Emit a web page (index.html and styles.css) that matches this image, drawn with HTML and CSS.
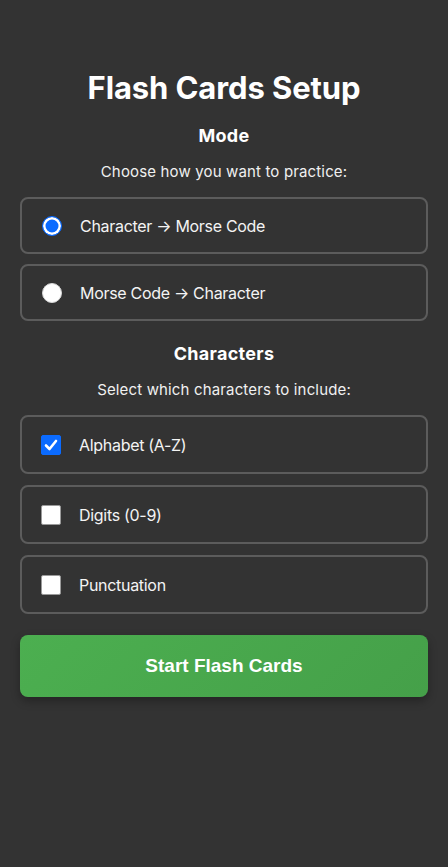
FILE: index.html
```html
<!DOCTYPE html>
<html lang="en">
<head>
<meta charset="utf-8">
<title>Flash Cards Setup</title>
<link rel="stylesheet" href="styles.css">
</head>
<body>
<main class="setup">
  <h1 class="title">Flash Cards Setup</h1>

  <section class="section">
    <h2 class="section-title">Mode</h2>
    <p class="section-desc">Choose how you want to practice:</p>
    <div class="options">
      <label class="option option-radio">
        <span class="radio checked"></span>
        <span class="option-text">Character → Morse Code</span>
      </label>
      <label class="option option-radio">
        <span class="radio"></span>
        <span class="option-text">Morse Code → Character</span>
      </label>
    </div>
  </section>

  <section class="section">
    <h2 class="section-title">Characters</h2>
    <p class="section-desc">Select which characters to include:</p>
    <div class="options options-check">
      <label class="option option-check">
        <span class="checkbox checked">
          <svg viewBox="0 0 20 20" width="20" height="20"><path d="M5 10.5 L8.5 14 L15 6" fill="none" stroke="#fff" stroke-width="2.6" stroke-linecap="round" stroke-linejoin="round"/></svg>
        </span>
        <span class="option-text">Alphabet (A-Z)</span>
      </label>
      <label class="option option-check">
        <span class="checkbox"></span>
        <span class="option-text">Digits (0-9)</span>
      </label>
      <label class="option option-check">
        <span class="checkbox"></span>
        <span class="option-text">Punctuation</span>
      </label>
    </div>
  </section>

  <button class="start-btn" type="button">Start Flash Cards</button>
</main>
</body>
</html>
```

FILE: styles.css
```css
* { box-sizing: border-box; }

html, body {
  margin: 0;
  padding: 0;
  background: #333333;
  color: #ffffff;
  font-family: Inter, "Noto Sans", "Liberation Sans", sans-serif;
  min-height: 100%;
}

.setup {
  display: flex;
  flex-direction: column;
  padding: 69px 20px 20px;
}

.title {
  margin: 0;
  font-size: 31px;
  line-height: 38px;
  font-weight: 700;
  text-align: center;
  letter-spacing: -0.1px;
}

.section {
  display: flex;
  flex-direction: column;
  margin-top: 18px;
}

.section + .section { margin-top: 22px; }

.section-title {
  margin: 0;
  font-size: 18px;
  line-height: 22px;
  font-weight: 700;
  text-align: center;
  letter-spacing: 0.3px;
}

.section-desc {
  margin: 16px 0 0;
  font-size: 15px;
  line-height: 18px;
  text-align: center;
  color: #f0f0f0;
  letter-spacing: 0.15px;
}

.options {
  display: flex;
  flex-direction: column;
  gap: 10px;
  margin-top: 16px;
}

.options-check { gap: 11px; }

.option {
  display: flex;
  align-items: center;
  gap: 18px;
  border: 2px solid #5c5c5c;
  border-radius: 8px;
  padding: 0 20px;
  height: 57px;
  font-size: 16px;
  letter-spacing: -0.3px;
  color: #f4f4f4;
}

.option-check { height: 59px; gap: 18px; padding-left: 19px; }

.radio {
  width: 20px;
  height: 20px;
  border-radius: 50%;
  background: #ffffff;
  border: 1px solid #d8d8d8;
  flex: none;
}

.radio.checked {
  background: #0b6bff;
  border: 1.5px solid #0b6bff;
  box-shadow: inset 0 0 0 2.5px #ffffff;
}

.checkbox {
  width: 20px;
  height: 20px;
  border-radius: 2px;
  background: #ffffff;
  border: 1px solid #9a9a9a;
  flex: none;
  display: flex;
}

.checkbox.checked {
  background: #0b6bff;
  border-color: #0b6bff;
}

.checkbox svg { margin: -1px; }

.start-btn {
  margin-top: 21px;
  height: 62px;
  border: none;
  border-radius: 8px;
  background: linear-gradient(135deg, #4caf50, #45a049);
  color: #ffffff;
  font-family: "Liberation Sans", Arial, sans-serif;
  font-size: 19px;
  font-weight: 700;
  box-shadow: 0 4px 10px rgba(0, 0, 0, 0.3);
}
```
